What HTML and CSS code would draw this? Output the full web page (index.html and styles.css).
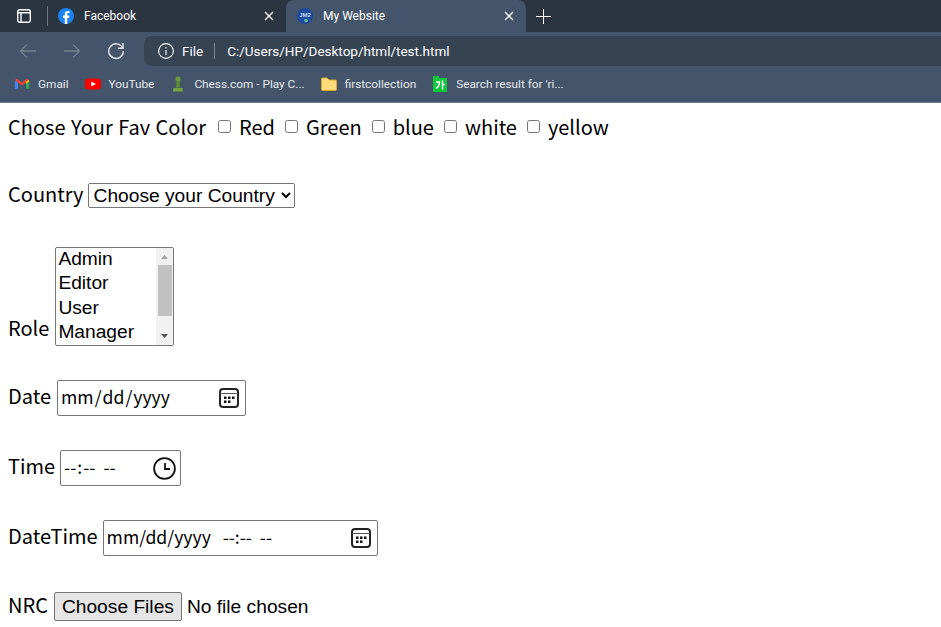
FILE: index.html
```html
<!DOCTYPE html>
<html>
<head>
    <title>My Website</title>
    <link rel="stylesheet" href="styles.css">
</head>
<body>
    <div class="browser">
        <div class="tab-strip">
            <div class="tab-start">
                <svg width="14" height="14" viewBox="0 0 14 14" fill="none" stroke="#fff" stroke-width="1.4"><rect x="0.7" y="0.7" width="12.6" height="12.6" rx="2"/><path d="M0.7 3.8H13.3M4 3.8V13.3"/></svg>
                <span class="tab-sep"></span>
            </div>
            <div class="tab">
                <svg width="16" height="16" viewBox="0 0 16 16"><circle cx="8" cy="8" r="8" fill="#1b84f2"/><path d="M6.8 16V10H5V7.6H6.8V6C6.8 4 8 3 9.7 3C10.5 3 11.2 3.1 11.4 3.1V5.1H10.3C9.4 5.1 9.2 5.6 9.2 6.2V7.6H11.3L11 10H9.2V16Z" fill="#fff"/></svg>
                <span class="tab-title">Facebook</span>
                <svg width="10" height="10" viewBox="0 0 10 10" stroke="#fff" stroke-width="1.3"><path d="M1 1L9 9M9 1L1 9"/></svg>
            </div>
            <div class="tab active">
                <svg width="16" height="16" viewBox="0 0 16 16"><circle cx="8" cy="8" r="8" fill="#1c4a9c"/><text x="8" y="9.4" font-size="6" font-weight="700" font-family="Liberation Sans" text-anchor="middle" fill="#c6d4ea">JM2</text><circle cx="9" cy="12.6" r="1.8" fill="#6fb79a"/></svg>
                <span class="tab-title">My Website</span>
                <svg width="10" height="10" viewBox="0 0 10 10" stroke="#fff" stroke-width="1.3"><path d="M1 1L9 9M9 1L1 9"/></svg>
            </div>
            <svg class="new-tab" width="15" height="15" viewBox="0 0 15 15" stroke="#fff" stroke-width="1"><path d="M7.5 0V15M0 7.5H15"/></svg>
        </div>

        <div class="toolbar">
            <svg class="nav" width="18" height="16" viewBox="0 0 18 16" fill="none" stroke="#75818f" stroke-width="1.3"><path d="M17 8H1.5M8 1.5L1.5 8L8 14.5"/></svg>
            <svg class="nav" width="18" height="16" viewBox="0 0 18 16" fill="none" stroke="#75818f" stroke-width="1.3"><path d="M1 8H16.5M10 1.5L16.5 8L10 14.5"/></svg>
            <svg class="nav reload" width="18" height="18" viewBox="0 0 18 18" fill="none" stroke="#e4e7ea" stroke-width="1.4"><path d="M15.6 6A7.3 7.3 0 1 0 16.3 9"/><path d="M16 1V6.2H10.8"/></svg>
            <div class="address">
                <svg width="16" height="16" viewBox="0 0 16 16" fill="none" stroke="#fff" stroke-width="1.1"><circle cx="8" cy="8" r="7.4"/><path d="M8 7V12M8 4V5.4"/></svg>
                <span class="scheme">File</span>
                <span class="address-sep"></span>
                <span>C:/Users/HP/Desktop/html/test.html</span>
            </div>
        </div>

        <div class="bookmarks">
            <div class="bookmark">
                <svg width="16" height="12" viewBox="-1 0 18 13.5"><path d="M0 3V12H3.5V4Z" fill="#4285f4"/><path d="M16 3V12H12.5V4Z" fill="#34a853"/><path d="M0 2.5L2 0.5L8 5L14 0.5L16 2.5L8 8.5Z" fill="#ea4335"/><path d="M12.5 4L16 2V4L12.5 6.5Z" fill="#fbbc04"/></svg>
                <span>Gmail</span>
            </div>
            <div class="bookmark">
                <svg width="16" height="12" viewBox="0 0 16 12"><rect width="16" height="11" y="0.5" rx="3" fill="#f00"/><path d="M6.3 3.5L10.8 6L6.3 8.5Z" fill="#fff"/></svg>
                <span>YouTube</span>
            </div>
            <div class="bookmark">
                <svg width="16" height="18" viewBox="0 0 16 18"><circle cx="8" cy="4" r="2.5" fill="#6f9a3c"/><path d="M5.5 6.4H10.5V7.6H9.4L10.3 12.5H5.7L6.6 7.6H5.5Z" fill="#5f8a32"/><path d="M3.5 13H12.5L13 16.5H3Z" fill="#76a342"/></svg>
                <span>Chess.com - Play C...</span>
            </div>
            <div class="bookmark">
                <svg width="16" height="14" viewBox="0 0 16 14"><path d="M0.5 2A1 1 0 0 1 1.5 1H6L8 3H14.5A1 1 0 0 1 15.5 4V12.5A1 1 0 0 1 14.5 13.5H1.5A1 1 0 0 1 0.5 12.5Z" fill="#fddc7b" stroke="#d9a92c"/></svg>
                <span>firstcollection</span>
            </div>
            <div class="bookmark">
                <svg width="16" height="16" viewBox="0 0 16 16"><rect x="1" y="2" width="14" height="14" fill="#10c83c"/><rect x="1" y="0" width="6" height="3" fill="#10c83c"/><path d="M4 6H7.5C7.5 9 6.5 11 4 12.5M10.5 4.5V13.5M10.5 8.5H12.5" fill="none" stroke="#fff" stroke-width="1.4"/></svg>
                <span>Search result for 'ri...</span>
            </div>
        </div>
    </div>

    <form class="page">
        <div class="row row-colors">
            <label class="colors-title">Chose Your Fav Color</label>
            <input type="checkbox" id="red"> <label for="red">Red</label>
            <input type="checkbox" id="green"> <label for="green">Green</label>
            <input type="checkbox" id="blue"> <label for="blue">blue</label>
            <input type="checkbox" id="white"> <label for="white">white</label>
            <input type="checkbox" id="yellow"> <label for="yellow">yellow</label>
        </div>

        <div class="row row-country">
            <label for="country">Country</label>
            <select id="country">
                <option>Choose your Country</option>
            </select>
        </div>

        <div class="row row-role">
            <label for="role">Role</label>
            <div class="list-box">
                <select id="role" size="4" multiple>
                    <option>Admin</option>
                    <option>Editor</option>
                    <option>User</option>
                    <option>Manager</option>
                    <option>Guest</option>
                </select>
                <div class="scrollbar">
                    <svg class="scroll-arrow" width="17" height="17" viewBox="0 0 17 17"><path d="M8.5 7L12 11H5Z" fill="#a3a3a3"/></svg>
                    <div class="scroll-track"><div class="scroll-thumb"></div></div>
                    <svg class="scroll-arrow" width="17" height="17" viewBox="0 0 17 17"><path d="M5 6H12L8.5 10Z" fill="#505050"/></svg>
                </div>
            </div>
        </div>

        <div class="row row-date">
            <label for="date">Date</label>
            <input type="date" id="date" class="date-input">
        </div>

        <div class="row row-time">
            <label for="time">Time</label>
            <input type="time" id="time" class="time-input">
        </div>

        <div class="row row-datetime">
            <label for="datetime">DateTime</label>
            <input type="text" id="datetime" class="datetime-input" placeholder="mm/dd/yyyy   --:--  --">
        </div>

        <div class="row row-file">
            <label for="nrc">NRC</label>
            <input type="file" id="nrc" multiple>
        </div>
    </form>
</body>
</html>
```

FILE: styles.css
```css
body {
    margin: 0;
    font-family: "Noto Sans CJK KR", "Noto Sans", sans-serif;
    background-color: #fff;
    overflow: hidden;
}

.browser {
    font-family: Roboto, sans-serif;
    color: #fff;
    font-size: 12px;
}

.tab-strip {
    height: 32px;
    display: flex;
    align-items: center;
    background-color: #2b3542;
}

.tab-start {
    width: 48px;
    display: flex;
    align-items: center;
    padding-left: 17px;
    gap: 16px;
    box-sizing: border-box;
}

.tab-sep {
    width: 1px;
    height: 20px;
    background-color: #6b7480;
}

.tab {
    width: 238px;
    height: 32px;
    display: flex;
    align-items: center;
    box-sizing: border-box;
    padding: 0 12px 0 10px;
}

.tab.active {
    width: 240px;
    background-color: #44546a;
    border-radius: 8px 8px 0 0;
    padding-left: 11px;
}

.tab-title {
    flex: 1;
    margin-left: 10px;
}

.new-tab {
    margin-left: 10px;
}

.toolbar {
    height: 34px;
    display: flex;
    align-items: center;
    box-sizing: border-box;
    background-color: #44546a;
    padding: 4px 0 0 19px;
}

.nav {
    margin-right: 26px;
}

.nav.reload {
    margin-right: 19px;
}

.address {
    flex: 1;
    height: 30px;
    display: flex;
    align-items: center;
    background-color: #364353;
    border-radius: 8px 0 0 8px;
    padding-left: 14px;
    font-size: 13.5px;
}

.scheme {
    margin-left: 8px;
}

.address-sep {
    width: 1px;
    height: 16px;
    background-color: #7a8592;
    margin: 0 12px 0 11px;
}

.bookmarks {
    height: 36px;
    display: flex;
    align-items: center;
    background-color: #44546a;
    border-bottom: 1px solid #6f7c8c;
    padding-left: 14px;
    gap: 16px;
    font-size: 11.8px;
}

.bookmark {
    display: flex;
    align-items: center;
    gap: 8px;
    color: #e6e9ed;
}

.page {
    padding: 0 8px;
    font-size: 20px;
    word-spacing: 1px;
}

.row {
    display: flex;
    align-items: center;
    gap: 6px;
}

.row-colors {
    height: 28px;
    margin-top: 9px;
}

.row-colors input {
    width: 13px;
    height: 13px;
    margin: 0 2px 0 4px;
}

.colors-title {
    margin-right: 2px;
}

.row-country {
    margin-top: 41px;
    gap: 4px;
}

.row-country label,
.row-file label {
    margin: -2px 0 2px;
}

.row-role {
    margin-top: 37px;
    align-items: flex-end;
}

.row-role label {
    margin-bottom: 4px;
}

.row-date,
.row-time,
.row-datetime {
    margin-top: 34px;
}

.row-date label,
.row-time label,
.row-datetime label {
    margin-bottom: 6px;
}

.row-time,
.row-datetime {
    gap: 5px;
}

.row-file {
    margin-top: 36px;
}

select,
input[type="file"] {
    font-family: "Liberation Sans", sans-serif;
    font-size: 19.2px;
}

#country {
    width: 207px;
    padding-left: 1px;
}

.list-box {
    display: flex;
    width: 119px;
    height: 99px;
    box-sizing: border-box;
    border: 1px solid #767676;
    border-radius: 2px;
}

#role {
    flex: 1;
    min-width: 0;
    height: 97px;
    padding: 0;
    border: none;
    outline: none;
    overflow: hidden;
}

#role option {
    height: 24.25px;
    padding: 0 2px;
    box-sizing: border-box;
}

.scrollbar {
    width: 17px;
    display: flex;
    flex-direction: column;
    background-color: #f1f1f1;
}

.scroll-arrow {
    flex: none;
}

.scroll-track {
    flex: 1;
    padding: 0 1px 0 2px;
}

.scroll-thumb {
    height: 51px;
    background-color: #c1c1c1;
}

.date-input,
.time-input,
.datetime-input {
    height: 36px;
    box-sizing: border-box;
    font-family: "Noto Sans CJK KR", "Noto Sans", sans-serif;
    font-size: 17.6px;
    word-spacing: 0;
    padding: 0 6px 4px 2px;
    border: 1px solid #767676;
    border-radius: 2px;
    background-repeat: no-repeat;
}

.date-input {
    width: 189px;
}

.time-input {
    width: 121px;
    padding-right: 4px;
}

.time-input::-webkit-datetime-edit-ampm-field {
    margin-left: 4px;
}

.datetime-input {
    width: 275px;
    padding-left: 3px;
    background-position: right 6px center;
    background-image: url("data:image/svg+xml,%3Csvg xmlns='http://www.w3.org/2000/svg' width='20' height='20' fill='none'%3E%3Crect x='1' y='1' width='18' height='18' rx='3' stroke='%23222' stroke-width='2'/%3E%3Cpath d='M1 5.5H19' stroke='%23555'/%3E%3Cpath d='M5 8.5h2.5V11H5zM9 8.5h2.5V11H9zM13 8.5h2.5V11H13zM5 12.5h2.5V15H5zM9 12.5h2.5V15H9z' fill='%23111'/%3E%3C/svg%3E");
}

.datetime-input::placeholder {
    color: #000;
    opacity: 1;
    white-space: pre;
}

.date-input::-webkit-calendar-picker-indicator,
.time-input::-webkit-calendar-picker-indicator {
    margin: 4px 0 0;
    padding: 0;
    background-position: center;
    background-repeat: no-repeat;
}

.date-input::-webkit-calendar-picker-indicator {
    width: 20px;
    height: 20px;
    background-image: url("data:image/svg+xml,%3Csvg xmlns='http://www.w3.org/2000/svg' width='20' height='20' fill='none'%3E%3Crect x='1' y='1' width='18' height='18' rx='3' stroke='%23222' stroke-width='2'/%3E%3Cpath d='M1 5.5H19' stroke='%23555'/%3E%3Cpath d='M5 8.5h2.5V11H5zM9 8.5h2.5V11H9zM13 8.5h2.5V11H13zM5 12.5h2.5V15H5zM9 12.5h2.5V15H9z' fill='%23111'/%3E%3C/svg%3E");
}

.time-input::-webkit-calendar-picker-indicator {
    width: 23px;
    height: 23px;
    background-image: url("data:image/svg+xml,%3Csvg xmlns='http://www.w3.org/2000/svg' width='23' height='23' fill='none' stroke='%23111' stroke-width='1.8'%3E%3Ccircle cx='11.5' cy='11.5' r='10.4'/%3E%3Cpath d='M12 6V12H17'/%3E%3C/svg%3E");
}

input[type="file"]::file-selector-button {
    height: 29px;
    padding: 0 7px;
    margin-right: 5px;
    background-color: #e5e5e5;
    border: 1px solid #767676;
    border-radius: 2px;
}
```
